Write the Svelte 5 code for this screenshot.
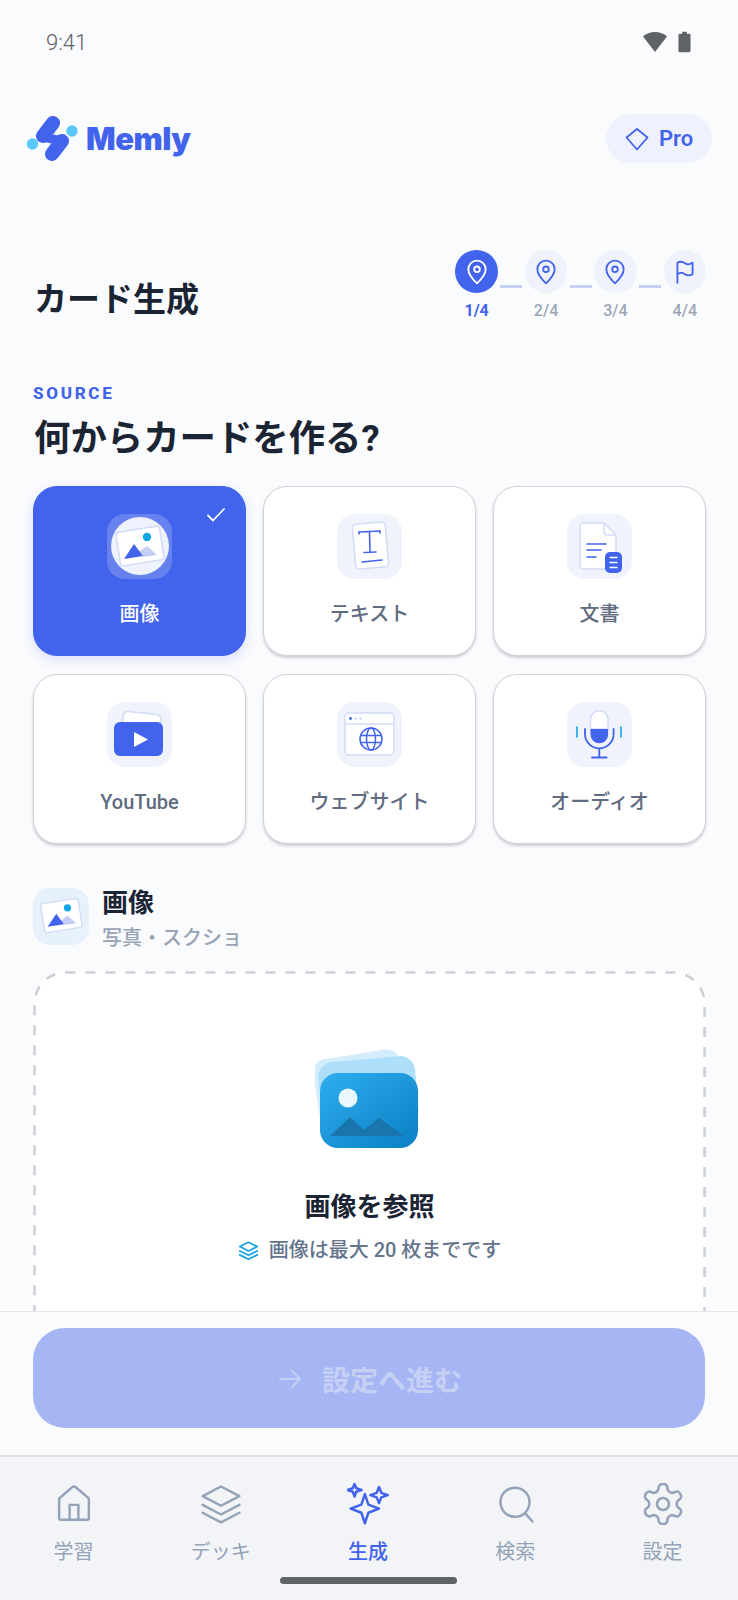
<script lang="ts">
  const steps = [
    { label: '1/4', icon: 'pin', active: true },
    { label: '2/4', icon: 'pin', active: false },
    { label: '3/4', icon: 'pin', active: false },
    { label: '4/4', icon: 'flag', active: false },
  ];

  const sources = [
    { id: 'image', label: '画像' },
    { id: 'text', label: 'テキスト' },
    { id: 'doc', label: '文書' },
    { id: 'youtube', label: 'YouTube' },
    { id: 'web', label: 'ウェブサイト' },
    { id: 'audio', label: 'オーディオ' },
  ];

  let selected = $state('image');

  const tabs = [
    { id: 'home', label: '学習', box: '0 0 24 24' },
    { id: 'deck', label: 'デッキ', box: '0 0 24 24' },
    { id: 'create', label: '生成', box: '0 0 24 24' },
    { id: 'search', label: '検索', box: '0 0 24 24' },
    { id: 'settings', label: '設定', box: '1 1.500 21 21' },
  ];
</script>

{#snippet photo()}
  <g transform="rotate(-9 33 32)">
    <rect x="11" y="15" width="44" height="34" rx="3" fill="#fff" stroke="#d3dbf6" stroke-width="1.5" />
  </g>
  <circle cx="40" cy="23" r="4.2" fill="#12a5e5" />
  <path d="M32 38l8-6 10 9-14 2z" fill="#c5cff3" />
  <path d="M17 45l10-15 9 12z" fill="#4263eb" />
{/snippet}

{#snippet tileIcon(id)}
  <svg viewBox="0 0 65 65" width="65" height="65" fill="none">
    {#if id === 'image'}
      <circle cx="33" cy="32" r="29" fill="#eef2fc" />
      {@render photo()}
    {:else if id === 'text'}
      <rect x="17" y="9" width="33" height="45" rx="4" transform="rotate(-5 33 32)" fill="#fff" stroke="#d3dbf6" stroke-width="1.5" />
      <path d="M22 20v-2l21-1v2M32.500 18l.5 20M27 38.500l12-.5M25 48l20-2" stroke="#4263eb" stroke-width="1.6" stroke-linecap="round" />
    {:else if id === 'doc'}
      <path d="M17 9h20l12 12v30a4 4 0 0 1-4 4H17a4 4 0 0 1-4-4V13a4 4 0 0 1 4-4z" fill="#fff" stroke="#d3dbf6" stroke-width="1.5" />
      <path d="M37 9v9a3 3 0 0 0 3 3h9" stroke="#d3dbf6" stroke-width="1.5" />
      <path d="M20 30h19M20 36h14M20 43h9" stroke="#4263eb" stroke-width="1.6" stroke-linecap="round" />
      <rect x="38" y="38" width="17" height="21" rx="5" fill="#4263eb" />
      <path d="M42.500 43.500h8M42.500 48.500h8M42.500 53.500h8" stroke="#fff" stroke-width="1.6" />
    {:else if id === 'youtube'}
      <rect x="15" y="11" width="38" height="30" rx="5" transform="rotate(6 34 26)" fill="#fff" stroke="#d3dbf6" stroke-width="1.5" />
      <rect x="7" y="20" width="49" height="34" rx="6" fill="#4263eb" />
      <path d="M27 30l14 7.500-14 7.500z" fill="#fff" />
    {:else if id === 'web'}
      <rect x="8" y="11" width="49" height="42" rx="4" fill="#fff" stroke="#d3dbf6" stroke-width="1.5" />
      <path d="M8 22h49" stroke="#d3dbf6" stroke-width="1.5" />
      <circle cx="13.500" cy="16.500" r="1.400" fill="#4263eb" />
      <circle cx="18.500" cy="16.500" r="1.200" fill="#c9d3f5" />
      <circle cx="23.500" cy="16.500" r="1.200" fill="#c9d3f5" />
      <circle cx="34" cy="37" r="11" stroke="#4263eb" stroke-width="1.5" />
      <ellipse cx="34" cy="37" rx="4.500" ry="11" stroke="#4263eb" stroke-width="1.5" />
      <path d="M23.500 33.500h21M23.500 40.500h21" stroke="#4263eb" stroke-width="1.5" />
    {:else if id === 'audio'}
      <path d="M23.500 27v-9.500a8.800 8.800 0 0 1 17.600 0V27z" fill="#fff" stroke="#d3dbf6" stroke-width="1.5" />
      <path d="M23.500 27h17.600v5.500a8.800 8.800 0 0 1-17.600 0z" fill="#4263eb" />
      <path d="M18 27v5a14.300 14.300 0 0 0 28.600 0v-5M32.300 47v8M25 55.500h14.600" stroke="#4263eb" stroke-width="1.8" stroke-linecap="round" />
      <path d="M10 25v10M54 25v10" stroke="#12a5e5" stroke-width="1.6" stroke-linecap="round" />
    {/if}
  </svg>
{/snippet}

{#snippet tabIcon(id, box)}
  <svg viewBox={box} width="42" height="42" fill="none" stroke="currentColor" stroke-width={id === 'settings' ? 1.300 : 1.400} stroke-linecap="round" stroke-linejoin="round">
    {#if id === 'home'}
      <path d="M4.500 21h15a1 1 0 0 0 1-1V9.500a1.500 1.500 0 0 0-.5-1.100l-7-6a1.500 1.500 0 0 0-2 0l-7 6a1.500 1.500 0 0 0-.5 1.100V20a1 1 0 0 0 1 1z" />
      <path d="M9.500 21v-8.500h5V21" />
    {:else if id === 'deck'}
      <path d="M12 2l10.500 5.500L12 13 1.500 7.500z" />
      <path d="M1.500 12.500L12 18l10.500-5.500M1.500 17L12 22.500 22.500 17" />
    {:else if id === 'create'}
      <path d="M10.200 6.300l2 6 6.100 2.300-6.100 2.400-2 6-2-6-6.100-2.400 6.100-2.300z" />
      <path d="M4.300 .5l1 2.500 3 1-3 1-1 2.700-1-2.700-3-1 3-1z" />
      <path d="M18.300 2.300l1.300 3.300 3.700 1.300-3.700 1.300-1.300 3.300-1.300-3.300-3.700-1.300 3.700-1.300z" />
    {:else if id === 'search'}
      <circle cx="12" cy="11" r="8.300" />
      <path d="M18 17.500l4 4.500" />
    {:else}
      <path d="M12.220 2h-.44a2 2 0 0 0-2 2v.18a2 2 0 0 1-1 1.730l-.43.25a2 2 0 0 1-2 0l-.15-.08a2 2 0 0 0-2.730.73l-.22.38a2 2 0 0 0 .73 2.730l.15.1a2 2 0 0 1 1 1.720v.51a2 2 0 0 1-1 1.740l-.15.09a2 2 0 0 0-.73 2.730l.22.38a2 2 0 0 0 2.730.73l.15-.08a2 2 0 0 1 2 0l.43.25a2 2 0 0 1 1 1.730V20a2 2 0 0 0 2 2h.44a2 2 0 0 0 2-2v-.18a2 2 0 0 1 1-1.730l.43-.25a2 2 0 0 1 2 0l.15.08a2 2 0 0 0 2.730-.73l.22-.39a2 2 0 0 0-.73-2.730l-.15-.08a2 2 0 0 1-1-1.740v-.5a2 2 0 0 1 1-1.740l.15-.09a2 2 0 0 0 .73-2.730l-.22-.38a2 2 0 0 0-2.730-.73l-.15.08a2 2 0 0 1-2 0l-.43-.25a2 2 0 0 1-1-1.730V4a2 2 0 0 0-2-2z" />
      <circle cx="12" cy="12" r="3" />
    {/if}
  </svg>
{/snippet}

<div class="screen">
  <div class="statusbar">
    <span class="time">9:41</span>
    <div class="status-icons">
      <svg viewBox="0 0 24 20" width="24" height="20"><path d="M0 4.500C3 1.500 7.500 0 12 0s9 1.500 12 4.500L12 20z" fill="#5f6368" /></svg>
      <svg viewBox="0 0 14 22" width="13" height="22"><path d="M4.500 0h5v2H12a1.500 1.500 0 0 1 1.500 1.500v17A1.500 1.500 0 0 1 12 22H2a1.500 1.500 0 0 1-1.500-1.500v-17A1.500 1.500 0 0 1 2 2h2.500z" fill="#5f6368" /></svg>
    </div>
  </div>

  <main class="content">
    <header class="topbar">
      <div class="brand">
        <svg viewBox="0 0 52 46" width="52" height="46" fill="none">
          <path d="M27 7L17 20" stroke="#4263eb" stroke-width="14" stroke-linecap="round" />
          <path d="M17 21l19 4" stroke="#4263eb" stroke-width="9" stroke-linecap="round" />
          <path d="M36 25L26 38" stroke="#4263eb" stroke-width="14" stroke-linecap="round" />
          <circle cx="46" cy="15" r="5.700" fill="#5cc8fa" />
          <circle cx="6.500" cy="28" r="5.700" fill="#5cc8fa" />
        </svg>
        <span class="wordmark">Memly</span>
      </div>
      <button class="pro" type="button">
        <svg viewBox="0 0 24 24" width="24" height="24" fill="none" stroke="#4263eb" stroke-width="1.800" stroke-linejoin="round"><path d="M12 2l10.500 8.500L12 22.500 1.500 10.500z" /></svg>
        Pro
      </button>
    </header>

    <div class="title-row">
      <h1>カード生成</h1>
      <ol class="stepper">
        {#each steps as step, i}
          <li class="step" class:active={step.active}>
            <span class="bubble">
              <svg viewBox="0 0 24 24" width="26" height="26" fill="none" stroke="currentColor" stroke-width="1.700" stroke-linecap="round" stroke-linejoin="round">
                {#if step.icon === 'pin'}
                  <path d="M12 22.500s8-7.500 8-13a8 8 0 0 0-16 0c0 5.500 8 13 8 13z" />
                  <circle cx="12" cy="9.500" r="2.600" />
                {:else}
                  <path d="M5 22V3.500c3-1.800 5-1 7 .5s4.500 1 7-.5V14c-2.500 1.500-5 1.500-7 0s-4-1.800-7 0" />
                {/if}
              </svg>
            </span>
            <span class="step-label">{step.label}</span>
            {#if i < steps.length - 1}<span class="connector"></span>{/if}
          </li>
        {/each}
      </ol>
    </div>

    <p class="eyebrow">SOURCE</p>
    <h2>何からカードを作る?</h2>

    <div class="grid">
      {#each sources as source}
        <button class="tile" class:selected={selected === source.id} type="button" onclick={() => (selected = source.id)}>
          {#if selected === source.id}
            <svg class="check" viewBox="0 0 18 14" width="18" height="14" fill="none" stroke="#fff" stroke-width="1.800" stroke-linecap="round" stroke-linejoin="round"><path d="M1 7.500l5 5L17 1" /></svg>
          {/if}
          <span class="tile-icon">{@render tileIcon(source.id)}</span>
          <span class="tile-label">{source.label}</span>
        </button>
      {/each}
    </div>

    <div class="section-head">
      <span class="section-icon">
        <svg viewBox="0 0 65 65" width="56" height="56" fill="none">
          {@render photo()}
        </svg>
      </span>
      <div class="section-text">
        <h3>画像</h3>
        <p>写真・スクショ</p>
      </div>
    </div>

    <div class="dropzone">
      <svg class="dashes" viewBox="0 0 673 420" width="673" height="420" fill="none">
        <rect x="1.500" y="1.500" width="670" height="417" rx="31" stroke="#cbcfd5" stroke-width="2.500" stroke-dasharray="10 10" />
      </svg>
      <svg class="hero" viewBox="0 0 110 102" width="110" height="102" fill="none">
        <defs>
          <linearGradient id="heroFill" x1="0" y1="0" x2="1" y2="1">
            <stop offset="0" stop-color="#2eaeee" />
            <stop offset="1" stop-color="#0a7fc4" />
          </linearGradient>
        </defs>
        <rect x="1" y="8" width="88" height="70" rx="13" transform="rotate(-9 45 43)" fill="#d3edfc" />
        <rect x="5" y="13" width="97" height="70" rx="15" transform="rotate(-5 53 48)" fill="#aedffa" />
        <rect x="5" y="27" width="98" height="75" rx="18" fill="url(#heroFill)" />
        <circle cx="33" cy="52" r="9.500" fill="#eaf7fe" />
        <path d="M15 90l20-19 14 13 15-12 25 18z" fill="#1a75ad" />
      </svg>
      <h4>画像を参照</h4>
      <p class="hint">
        <svg viewBox="0 0 24 24" width="21" height="21" fill="none" stroke="#1ba3e0" stroke-width="2" stroke-linejoin="round" stroke-linecap="round"><path d="M12 2.500l10 5-10 5-10-5z" /><path d="M2 12.500l10 5 10-5M2 17l10 5 10-5" /></svg>
        画像は最大 20 枚までです
      </p>
    </div>
  </main>

  <div class="actionbar">
    <button class="next" type="button" disabled>
      <svg viewBox="0 0 24 24" width="24" height="24" fill="none" stroke="currentColor" stroke-width="1.900" stroke-linecap="round" stroke-linejoin="round"><path d="M2 12h20M14 4l8 8-8 8" /></svg>
      設定へ進む
    </button>
  </div>

  <nav class="tabbar">
    {#each tabs as tab}
      <button class="tab" class:current={tab.id === 'create'} type="button">
        {@render tabIcon(tab.id, tab.box)}
        <span>{tab.label}</span>
      </button>
    {/each}
    <span class="home-indicator"></span>
  </nav>
</div>

<style>
  :global(body) {
    margin: 0;
    background: #fafbfd;
  }

  .screen {
    width: 738px;
    height: 1600px;
    display: flex;
    flex-direction: column;
    overflow: hidden;
    background: #fafbfd;
    font-family: Roboto, 'Noto Sans CJK JP', sans-serif;
    color: #1a2433;
  }

  button {
    font-family: inherit;
    border: none;
    cursor: pointer;
  }

  h1, h2, h3, h4, p, ol {
    margin: 0;
    padding: 0;
  }

  .statusbar {
    height: 84px;
    flex: none;
    display: flex;
    align-items: center;
    justify-content: space-between;
    padding: 0 47px 0 46px;
  }

  .time {
    font-size: 22px;
    font-weight: 300;
    color: #5f6368;
  }

  .status-icons {
    display: flex;
    align-items: center;
    gap: 11px;
  }

  .content {
    flex: 1;
    min-height: 0;
    overflow: hidden;
    padding: 0 32px 0 33px;
  }

  .topbar {
    display: flex;
    align-items: center;
    justify-content: space-between;
    margin: 30px -6px 0 -7px;
  }

  .brand {
    display: flex;
    align-items: center;
    gap: 8px;
  }

  .wordmark {
    font-family: Inter, sans-serif;
    font-size: 31px;
    font-weight: 900;
    letter-spacing: -0.5px;
    color: #4263eb;
  }

  .pro {
    height: 49px;
    width: 106px;
    border-radius: 25px;
    background: #eff2fc;
    color: #4263eb;
    font-size: 22px;
    font-weight: 600;
    display: flex;
    align-items: center;
    justify-content: center;
    gap: 10px;
  }

  .title-row {
    display: flex;
    justify-content: space-between;
    align-items: flex-start;
    margin-top: 87px;
  }

  h1 {
    font-size: 33px;
    line-height: 44px;
    font-weight: 700;
    margin: 28px 0 0 1px;
  }

  .stepper {
    list-style: none;
    display: flex;
    gap: 27px;
  }

  .step {
    position: relative;
    width: 42.400px;
    display: flex;
    flex-direction: column;
    align-items: center;
  }

  .bubble {
    width: 42.400px;
    height: 43px;
    border-radius: 50%;
    background: #eff2fb;
    color: #4263eb;
    display: flex;
    align-items: center;
    justify-content: center;
  }

  .step.active .bubble {
    background: #4263eb;
    color: #fff;
  }

  .connector {
    position: absolute;
    left: 45px;
    top: 35px;
    width: 22px;
    height: 3px;
    background: #c5d0f5;
  }

  .step-label {
    margin-top: 8px;
    font-size: 16px;
    line-height: 20px;
    font-weight: 500;
    color: #9aa5b5;
  }

  .step.active .step-label {
    font-weight: 700;
    color: #4263eb;
  }

  .eyebrow {
    margin-top: 61px;
    font-size: 17px;
    line-height: 20px;
    font-weight: 800;
    letter-spacing: 2.700px;
    color: #4263eb;
  }

  h2 {
    margin: 13px 0 0 1px;
    font-size: 36.400px;
    line-height: 46px;
    font-weight: 700;
  }

  .grid {
    display: grid;
    grid-template-columns: repeat(3, 213px);
    grid-auto-rows: 170px;
    gap: 18px 17px;
    margin-top: 24px;
  }

  .tile {
    position: relative;
    box-sizing: border-box;
    display: flex;
    flex-direction: column;
    align-items: center;
    padding: 27px 0 0;
    border-radius: 24px;
    background: #fff;
    border: 1px solid #cfd3da;
    box-shadow: 0 2px 3px rgba(40, 50, 70, 0.22);
  }

  .tile.selected {
    background: #4263eb;
    border-color: #4263eb;
    box-shadow: 0 4px 12px rgba(66, 99, 235, 0.18);
  }

  .check {
    position: absolute;
    top: 21px;
    right: 20px;
  }

  .tile-icon {
    width: 65px;
    height: 65px;
    border-radius: 18px;
    background: #f0f3fb;
    display: block;
  }

  .tile.selected .tile-icon {
    background: rgba(255, 255, 255, 0.2);
  }

  .tile-label {
    margin-top: 21px;
    font-size: 20px;
    line-height: 28px;
    font-weight: 500;
    color: #5f6b80;
  }

  .tile.selected .tile-label {
    color: #fff;
  }

  .section-head {
    display: flex;
    align-items: flex-start;
    gap: 13px;
    margin-top: 44px;
  }

  .section-icon {
    flex: none;
    width: 56px;
    height: 57px;
    border-radius: 17px;
    background: #e6f1fc;
    display: block;
  }

  .section-text {
    margin-top: -2px;
  }

  .section-text h3 {
    font-size: 26px;
    line-height: 34px;
    font-weight: 700;
  }

  .section-text p {
    margin-top: 3px;
    font-size: 20px;
    line-height: 30px;
    font-weight: 500;
    color: #98a4b5;
  }

  .dropzone {
    position: relative;
    box-sizing: border-box;
    height: 420px;
    margin-top: 18px;
    border-radius: 32px;
    background: #fff;
    display: flex;
    flex-direction: column;
    align-items: center;
    padding-top: 75px;
  }

  .dashes {
    position: absolute;
    left: 0;
    top: 0;
  }

  .dropzone h4 {
    margin-top: 40px;
    font-size: 26px;
    line-height: 38px;
    font-weight: 700;
  }

  .hint {
    margin-top: 9px;
    display: flex;
    align-items: center;
    gap: 10px;
    font-size: 20px;
    line-height: 30px;
    font-weight: 500;
    color: #64748b;
  }

  .actionbar {
    flex: none;
    height: 144px;
    box-sizing: border-box;
    border-top: 1px solid #e4e6ea;
    padding: 16px 33px 0;
    background: #fafbfd;
  }

  .next {
    width: 100%;
    height: 100px;
    border-radius: 32px;
    background: #a6b5f3;
    color: #c5d0f5;
    font-size: 28px;
    font-weight: 700;
    display: flex;
    align-items: center;
    justify-content: center;
    gap: 20px;
    padding: 1px 0 0 2px;
  }

  .tabbar {
    position: relative;
    flex: none;
    height: 145px;
    box-sizing: border-box;
    border-top: 2px solid #dfe1e5;
    background: #f2f4f7;
    padding-right: 2px;
    display: grid;
    grid-template-columns: repeat(5, 1fr);
  }

  .tab {
    background: none;
    padding: 26px 0 0;
    display: flex;
    flex-direction: column;
    align-items: center;
    align-self: start;
    color: #94a3b8;
    font-size: 20px;
    font-weight: 400;
    gap: 13px;
    line-height: 28px;
  }

  .tab.current {
    color: #4263eb;
    font-weight: 500;
  }

  .home-indicator {
    position: absolute;
    left: 280px;
    bottom: 16px;
    width: 177px;
    height: 7px;
    border-radius: 4px;
    background: #5f6368;
  }
</style>
